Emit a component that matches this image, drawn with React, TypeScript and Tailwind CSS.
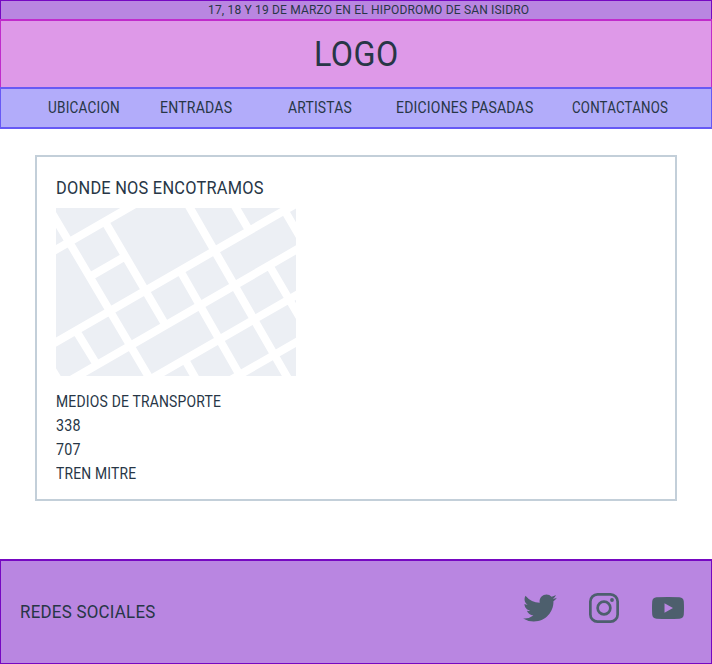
import { useLayoutEffect, useRef, useState } from "react";
import { IoLogoTwitter } from "react-icons/io5";

type FitProps = { text: string; width: number; className?: string };

/** A single line of condensed lettering, squeezed to the given width. */
function Condensed({ text, width, className = "" }: FitProps) {
  const ref = useRef<HTMLSpanElement>(null);
  const [scale, setScale] = useState(1);
  useLayoutEffect(() => {
    if (ref.current) setScale(width / ref.current.offsetWidth);
  }, [text, width]);
  return (
    <span className={`block shrink-0 whitespace-nowrap tracking-[0.015em] ${className}`} style={{ width }}>
      <span ref={ref} className="inline-block origin-left" style={{ transform: `scaleX(${scale})` }}>
        {text}
      </span>
    </span>
  );
}

const roads = [
  "M-7 45.7L80-4.5",
  "M-6 1.6L94 171",
  "M-7 138.2L250-10",
  "M14.8 172L250 36.2",
  "M90 173.8L250 81.5",
  "M172 173.5L250 128.5",
  "M131.7-4L232.8 172",
  "M124 62.6L186.5 172",
  "M48 12L109.5 117",
  "M36 67.5L69 48.5",
  "M20 122.7L41 157",
  "M177.7-4L193.5 23",
  "M228 1.5L244 29",
  "M213 57L244 110",
  "M128 150L140.5 172",
];

function StreetMap() {
  return (
    <svg viewBox="0 0 240 168" className="block h-[168px] w-[240px]">
      <rect width="240" height="168" fill="#eceff4" />
      <path d={roads.join("")} stroke="white" strokeWidth="8" fill="none" />
      <path d="M0 160.3L4.7 168H0Z" fill="white" />
    </svg>
  );
}

function InstagramIcon({ className }: { className: string }) {
  return (
    <svg viewBox="0 0 30 30" className={className} fill="none" stroke="currentColor" strokeWidth="2.7">
      <rect x="1.35" y="1.35" width="27.3" height="27.3" rx="7.2" />
      <circle cx="15" cy="15" r="6.35" />
      <circle cx="23" cy="7" r="1.9" fill="currentColor" stroke="none" />
    </svg>
  );
}

function YoutubeIcon({ className }: { className: string }) {
  return (
    <svg viewBox="0 0 32 22" className={className} fill="currentColor" fillRule="evenodd">
      <path d="M4.500 .3Q16-.3 27.500 .3Q31.500.6 31.800 4.500Q32.200 11 31.800 17.500Q31.500 21.400 27.500 21.700Q16 22.300 4.500 21.700Q.5 21.400.2 17.500Q-.2 11 .2 4.500Q.5.6 4.500 .3ZM12.500 6.300V15.700L21 11Z" />
    </svg>
  );
}

export default function App() {
  return (
    <div className="flex h-[664px] w-[712px] flex-col bg-white font-['Roboto',sans-serif] text-[#273646]">
      <div className="flex h-[19px] border border-b-0 border-[#7608c2] bg-[#b986e1] pl-[207px]">
        <Condensed text="17, 18 Y 19 DE MARZO EN EL HIPODROMO DE SAN ISIDRO" width={321} className="text-[13px] leading-[18px]" />
      </div>
      <header className="flex h-[68px] items-center justify-center border border-t-2 border-b-0 border-[#c02ccb] bg-[#de99e8]">
        <Condensed text="LOGO" width={85} className="text-[35px] leading-[66px] pt-px" />
      </header>
      <nav className="flex h-[42px] border-x border-y-2 border-[#6759f5] bg-[#b2acfa] pl-[47px] text-[16px] leading-[38px]">
        <Condensed text="UBICACION" width={72} className="mr-[40px]" />
        <Condensed text="ENTRADAS" width={72} className="mr-[56px]" />
        <Condensed text="ARTISTAS" width={64} className="mr-[44px]" />
        <Condensed text="EDICIONES PASADAS" width={137} className="mr-[39px]" />
        <Condensed text="CONTACTANOS" width={96} />
      </nav>
      <main className="mx-[35px] mt-[26px] flex h-[346px] flex-col border-2 border-[#c3cfd9] pl-[19px] pt-[19px]">
        <h1>
          <Condensed text="DONDE NOS ENCOTRAMOS" width={208} className="text-[18px] leading-[24px]" />
        </h1>
        <div className="mt-2">
          <StreetMap />
        </div>
        <div className="mt-[14px] text-[16px] leading-[24px]">
          <Condensed text="MEDIOS DE TRANSPORTE" width={165} />
          <Condensed text="338" width={25} />
          <Condensed text="707" width={25} />
          <Condensed text="TREN MITRE" width={80.5} />
        </div>
      </main>
      <footer className="mt-[58px] flex h-[105px] items-start justify-between border border-t-2 border-[#7608c2] bg-[#b986e1] pl-[19px] pr-[27px]">
        <Condensed text="REDES SOCIALES" width={136} className="mt-[39px] text-[18px] leading-[24px]" />
        <div className="mt-[29px] flex items-center text-[#4d5f6d]">
          <IoLogoTwitter className="mr-[31px] size-[36px]" />
          <InstagramIcon className="mr-[33px] size-[30px]" />
          <YoutubeIcon className="h-[22px] w-8" />
        </div>
      </footer>
    </div>
  );
}
